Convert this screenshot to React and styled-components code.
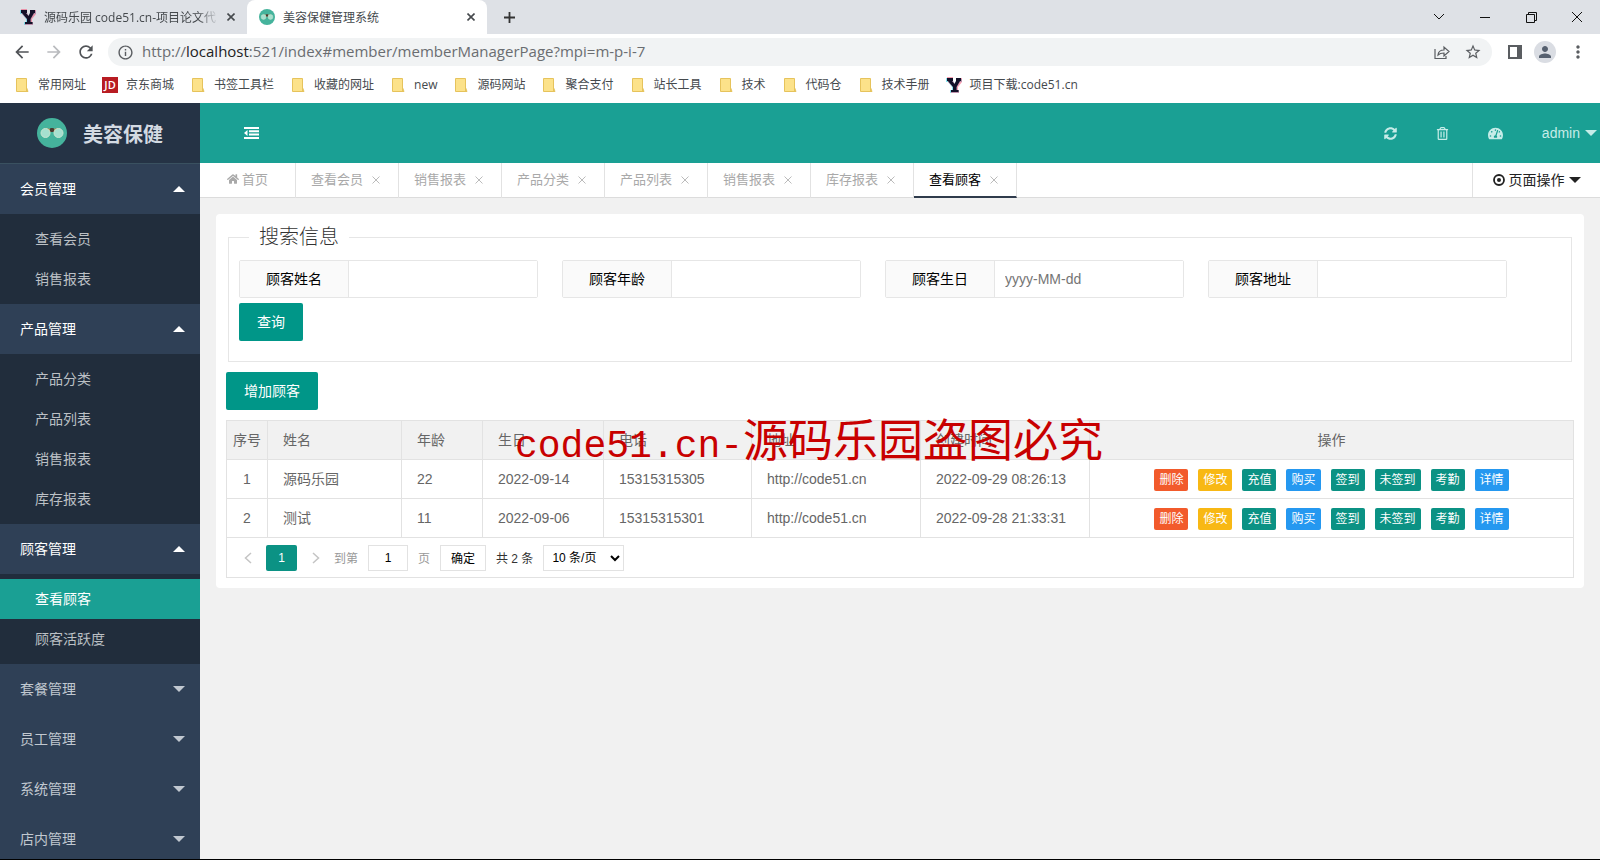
import React, { useState } from "react"
import styled, { createGlobalStyle } from "styled-components"
import { FaHome, FaRegTrashAlt, FaSyncAlt, FaTachometerAlt } from "react-icons/fa"
import {
  MdArrowBack,
  MdArrowForward,
  MdRefresh,
  MdInfoOutline,
  MdStarBorder,
  MdPerson,
  MdMoreVert,
} from "react-icons/md"

const sans = `"Liberation Sans", "Noto Sans CJK SC", sans-serif`
const chromeSans = `"Open Sans", "Noto Sans CJK SC", sans-serif`

const GlobalStyle = createGlobalStyle`
  * {
    box-sizing: border-box;
  }

  body {
    margin: 0;
    background: #f1f1f1;
    font-family: ${sans};
    font-size: 14px;
    color: #333;
  }

  button, input, select {
    font-family: inherit;
    margin: 0;
  }

  a {
    color: inherit;
    text-decoration: none;
  }
`

const Page = styled.div`
  position: relative;
  display: flex;
  flex-direction: column;
  height: 100vh;
  overflow: hidden;
  border-bottom: 1px solid #000;
`

/* browser window */

const TabStrip = styled.div`
  display: flex;
  align-items: center;
  flex: none;
  height: 34px;
  background: #dee1e6;
  font-family: ${chromeSans};
  font-size: 12px;
`

const BrowserTab = styled.div`
  display: flex;
  align-items: center;
  gap: 8px;
  width: ${props => (props.$active ? "240px" : "247px")};
  height: 34px;
  padding: 0 12px 0 ${props => (props.$active ? "12px" : "20px")};
  border-radius: 8px 8px 0 0;
  background: ${props => (props.$active ? "#fff" : "transparent")};
  color: #45494d;
`

const TabTitle = styled.span`
  flex: 1;
  overflow: hidden;
  white-space: nowrap;
  mask-image: ${props =>
    props.$fade ? "linear-gradient(to right, #000 88%, transparent)" : "none"};
`

const PlainButton = styled.button`
  display: flex;
  align-items: center;
  justify-content: center;
  flex: none;
  padding: 0;
  border: 0;
  background: none;
  color: inherit;
  cursor: pointer;
`

const NewTab = styled(PlainButton)`
  width: 44px;
`

const WindowButtons = styled.div`
  display: flex;
  margin-left: auto;
  height: 28px;
  color: #111;
`

const WindowButton = styled(PlainButton)`
  width: 46px;
`

const Toolbar = styled.div`
  display: flex;
  align-items: center;
  flex: none;
  height: 36px;
  padding: 0 12px;
  background: #fff;
  color: #5a5d61;
`

const NavButton = styled(PlainButton)`
  width: 20px;
  margin-right: 12px;
  font-size: 20px;
  color: ${props => (props.$off ? "#b9bbbe" : "#505357")};
`

const Omnibox = styled.div`
  display: flex;
  align-items: center;
  flex: 1;
  height: 28px;
  padding: 0 10px 0 9px;
  border-radius: 14px;
  background: #f1f3f4;
  gap: 14px;
`

const Address = styled.div`
  display: flex;
  align-items: center;
  gap: 8px;
  flex: 1;
`

const Url = styled.span`
  flex: 1;
  padding-bottom: 2px;
  font-family: ${chromeSans};
  font-size: 15px;
  line-height: 20px;
  color: #6a6d71;
  white-space: nowrap;

  b {
    font-weight: 400;
    color: #222;
  }
`

const ToolbarIcons = styled.div`
  display: flex;
  align-items: center;
  gap: 12px;
  padding-left: 16px;
`

const Avatar = styled(PlainButton)`
  width: 22px;
  height: 22px;
  border-radius: 50%;
  background: #dadde3;
  color: #56606f;
  font-size: 18px;
`

const Bookmarks = styled.nav`
  display: flex;
  align-items: center;
  flex: none;
  gap: 16px;
  height: 33px;
  padding: 0 14px 4px;
  background: #fff;
  font-family: ${chromeSans};
  font-size: 12px;
  line-height: 16px;
  color: #45494d;
`

const Bookmark = styled.a`
  display: flex;
  align-items: center;
  gap: 8px;
  white-space: nowrap;
`

const JdMark = styled.span`
  width: 16px;
  height: 16px;
  background: #b81c22;
  color: #fff;
  font-size: 11px;
  line-height: 16px;
  font-weight: 600;
  text-align: center;
`

/* admin application */

const Admin = styled.div`
  display: flex;
  flex: 1;
  min-height: 0;
`

const Sidebar = styled.aside`
  flex: none;
  width: 200px;
  overflow: hidden;
  background: #2f4056;
`

const Brand = styled.div`
  display: flex;
  align-items: center;
  gap: 16px;
  height: 61px;
  padding-left: 37px;
  background: #253345;
  border-bottom: 1px solid #3a5160;
  color: #d3dae2;
  font-size: 20px;
  font-weight: 700;
`

const GroupTitle = styled.button`
  display: flex;
  align-items: center;
  justify-content: space-between;
  width: 100%;
  height: 50px;
  padding: 0 15px 1px 20px;
  border: 0;
  background: none;
  color: ${props => (props.$open ? "#fff" : "#c1c8d0")};
  font-size: 14px;
  line-height: 20px;
  cursor: pointer;
`

const SubMenu = styled.div`
  padding: 5px 0;
  background: #212d3c;
`

const SubLink = styled.a`
  display: block;
  height: 40px;
  padding-left: 35px;
  line-height: 40px;
  background: ${props => (props.$active ? "#1aa094" : "transparent")};
  color: ${props => (props.$active ? "#fff" : "#bcc0c5")};
`

const Caret = styled.span`
  width: 0;
  border: 6px solid transparent;
  border-width: ${props => (props.$up ? "0 6px 6px" : "6px 6px 0")};
  border-top-color: currentColor;
  border-bottom-color: currentColor;
`

const Main = styled.main`
  flex: 1;
  min-width: 0;
`

const Header = styled.header`
  display: flex;
  align-items: center;
  height: 60px;
  padding: 0 3px 0 44px;
  background: #1aa094;
  color: #c6ece8;
`

const FoldButton = styled(PlainButton)`
  color: #fff;
`

const HeaderTools = styled.div`
  display: flex;
  align-items: center;
  gap: 39px;
  margin-left: auto;
  font-size: 13px;
`

const User = styled(PlainButton)`
  gap: 5px;
  font-size: 14px;
`

const PageTabs = styled.nav`
  display: flex;
  height: 35px;
  background: #fff;
  border-bottom: 1px solid #dcdcdc;
`

const PageTab = styled.div`
  display: flex;
  align-items: center;
  justify-content: space-between;
  width: 103px;
  height: 35px;
  padding: 0 18px ${props => (props.$active ? "2px" : "4px")} 15px;
  border-right: 1px solid #e2e2e2;
  border-bottom: ${props => (props.$active ? "2px solid #2f3b4c" : "0")};
  color: ${props => (props.$active ? "#000" : "#a9a9a9")};
  font-size: 13px;
  white-space: nowrap;
`

const HomeTab = styled(PageTab)`
  width: 96px;
  padding-left: 27px;
  justify-content: flex-start;
  gap: 3px;
`

const CloseTab = styled(PlainButton)`
  padding-top: 2px;
  color: #bbb;
`

const PageActions = styled(PlainButton)`
  gap: 4px;
  width: 128px;
  margin-left: auto;
  border-left: 1px solid #e2e2e2;
  font-size: 14px;
  line-height: 20px;
  color: #222;
`

const Card = styled.section`
  margin: 16px;
  padding: 10px;
  border-radius: 4px;
  background: #fff;
`

const SearchBox = styled.fieldset`
  min-width: 0;
  margin: 0 2px 10px;
  padding: 10px 10px 20px;
  border: 1px solid #e6e6e6;

  legend {
    margin-left: 10px;
    padding: 0 10px;
    font-size: 20px;
    font-weight: 300;
    line-height: 26px;
  }
`

const Fields = styled.div`
  display: flex;
  flex-wrap: wrap;
  gap: 5px 24px;
  margin-bottom: 5px;
`

const Field = styled.div`
  display: flex;
  width: 299px;
  height: 38px;
  border: 1px solid #e6e6e6;
  border-radius: 2px;

  label {
    width: 109px;
    flex: none;
    border-right: 1px solid #e6e6e6;
    background: #fafafa;
    color: #000;
    line-height: 36px;
    text-align: center;
  }

  input {
    flex: 1;
    min-width: 0;
    padding: 0 0 0 10px;
    border: 0;
    font-size: 14px;
  }

  input::placeholder {
    color: #757575;
  }
`

const Button = styled.button`
  display: block;
  height: 38px;
  padding: 0 18px 2px;
  border: 0;
  border-radius: 2px;
  background: #009688;
  color: #fff;
  font-size: 14px;
  cursor: pointer;
`

const TableBox = styled.div`
  margin: 10px 0 0;
  border: 1px solid #e2e2e2;
`

const Table = styled.table`
  width: 100%;
  table-layout: fixed;
  border-collapse: separate;
  border-spacing: 0;
  color: #666;

  th,
  td {
    height: 39px;
    padding: 0 15px;
    border-right: 1px solid #e2e2e2;
    border-bottom: 1px solid #e2e2e2;
    font-weight: 400;
    line-height: 20px;
    text-align: left;
    white-space: nowrap;
  }

  th {
    background: #f1f1f1;
  }

  th:first-child,
  td:first-child {
    padding: 0;
    text-align: center;
  }

  th:last-child,
  td:last-child {
    border-right: 0;
    text-align: center;
  }
`

const Actions = styled.div`
  display: flex;
  justify-content: center;
  gap: 10px;
  padding-top: 1px;
`

const tones = {
  red: "#f25a2b",
  yellow: "#f8b814",
  green: "#0b9284",
  blue: "#2598f0",
}

const MiniButton = styled.button`
  height: 22px;
  padding: 0 5px;
  border: 0;
  border-radius: 2px;
  background: ${props => tones[props.$tone]};
  color: #fff;
  font-size: 12px;
  line-height: 22px;
  cursor: pointer;
`

const Pager = styled.div`
  display: flex;
  align-items: center;
  height: 39px;
  padding-left: 12px;
  gap: 10px;
  font-size: 12px;
  color: #999;
`

const PagerArrow = styled(PlainButton)`
  width: 17px;
  color: #c4c4c4;
`

const PagerCurrent = styled(PlainButton)`
  width: 31px;
  height: 26px;
  border-radius: 2px;
  background: #0b9284;
  color: #fff;
  font-size: 12px;
`

const PagerLabel = styled.label`
  display: flex;
  align-items: center;
  gap: 10px;

  input {
    width: 40px;
    height: 26px;
    padding: 0;
    border: 1px solid #e2e2e2;
    text-align: center;
    font-size: 12px;
    color: #000;
  }
`

const PagerButton = styled(PlainButton)`
  width: 46px;
  height: 26px;
  border: 1px solid #e2e2e2;
  background: #fff;
  color: #000;
  font-size: 12px;
`

const PagerTotal = styled.span`
  color: #333;
`

const PagerSelect = styled.select`
  width: 81px;
  height: 26px;
  padding: 0 0 0 4px;
  border: 1px solid #e2e2e2;
  background: #fff;
  color: #000;
  font-size: 12px;
`

const Watermark = styled.div`
  position: absolute;
  top: 406px;
  left: 515px;
  color: #c80000;
  font-family: "Noto Sans CJK SC", sans-serif;
  font-size: 45px;
  line-height: 64px;
  white-space: nowrap;
  pointer-events: none;

  span {
    font-family: "Liberation Mono", monospace;
    font-size: 38px;
  }
`

const Cross = ({ size = 8, width = 1.6 }) => (
  <svg width={size} height={size} viewBox="0 0 8 8" aria-hidden="true">
    <path d="M.5 .5 7.5 7.5M7.5 .5 .5 7.5" stroke="currentColor" strokeWidth={width} />
  </svg>
)

const CodeMark = () => (
  <svg width="16" height="16" viewBox="0 0 16 16" aria-hidden="true">
    <path d="M0 1h7v3l2 3 1-3V2h6v3h-2l-3 5v3h2v3H4v-3h2v-3L2 5H0z" fill="#3ed3e6" opacity=".6" />
    <path d="M1 0h6v4l2 3 2-4V1h5v4l-4 5v3h1v3H5v-3h2v-3L2 5z" fill="#f4436c" opacity=".5" />
    <path d="M1 1h6v3h-1l2.500 3L10 4V1h5v3h-1l-3.500 6v3h2v2H5v-2h2v-3L2 4H1z" fill="#131128" />
  </svg>
)

const SpaLogo = ({ size }) => (
  <svg width={size} height={size} viewBox="0 0 30 30" aria-hidden="true">
    <circle cx="15" cy="15" r="15" fill="#45b39c" />
    <path d="M6 12q3-3 7-1h4q4-2 7 1l-6 2h-6z" fill="#b98650" />
    <rect x="13" y="10" width="4" height="4" rx="1" fill="#4a3a31" />
    <circle cx="8.500" cy="15" r="4.500" fill="#a6e0cf" stroke="#c9e6d2" />
    <circle cx="21.500" cy="15" r="4.500" fill="#a6e0cf" stroke="#c9e6d2" />
  </svg>
)

const FolderIcon = () => (
  <svg width="16" height="16" viewBox="0 0 16 16" aria-hidden="true">
    <path d="M2.500 1.500h10v9l1.500 4H2.500z" fill="#fce28a" stroke="#e6c35c" />
    <path d="M12.500 9v5.500" stroke="#e6c35c" />
  </svg>
)

const FoldIcon = () => (
  <svg width="15" height="12" viewBox="0 0 15 12" aria-hidden="true">
    <path d="M0 0h15v2H0zM5 3.300h10v2H5zM5 6.600h10v2H5zM0 10h15v2H0zM3.500 3v6L0 6z" fill="currentColor" />
  </svg>
)

const DotCircle = () => (
  <svg width="12" height="12" viewBox="0 0 12 12" aria-hidden="true">
    <circle cx="6" cy="6" r="5" fill="none" stroke="currentColor" strokeWidth="1.800" />
    <circle cx="6" cy="6" r="2" fill="currentColor" />
  </svg>
)

const Chevron = ({ right }) => (
  <svg width="8" height="12" viewBox="0 0 8 12" aria-hidden="true">
    <path d={right ? "M1 1l5.500 5L1 11" : "M7 1 1.500 6 7 11"} fill="none" stroke="currentColor" strokeWidth="1.500" />
  </svg>
)

const bookmarks = [
  "常用网址",
  "京东商城",
  "书签工具栏",
  "收藏的网址",
  "new",
  "源码网站",
  "聚合支付",
  "站长工具",
  "技术",
  "代码仓",
  "技术手册",
  "项目下载:code51.cn",
]

const menu = [
  { title: "会员管理", items: ["查看会员", "销售报表"] },
  { title: "产品管理", items: ["产品分类", "产品列表", "销售报表", "库存报表"] },
  { title: "顾客管理", items: ["查看顾客", "顾客活跃度"] },
  { title: "套餐管理", items: [] },
  { title: "员工管理", items: [] },
  { title: "系统管理", items: [] },
  { title: "店内管理", items: [] },
]

const pageTabs = ["查看会员", "销售报表", "产品分类", "产品列表", "销售报表", "库存报表", "查看顾客"]

const fields = [
  { id: "name", label: "顾客姓名" },
  { id: "age", label: "顾客年龄" },
  { id: "birthday", label: "顾客生日", placeholder: "yyyy-MM-dd" },
  { id: "address", label: "顾客地址" },
]

const columns = [
  { title: "序号", width: 41 },
  { title: "姓名", width: 134 },
  { title: "年龄", width: 81 },
  { title: "生日", width: 121 },
  { title: "电话", width: 148 },
  { title: "地址", width: 169 },
  { title: "创建时间", width: 169 },
  { title: "操作" },
]

const customers = [
  ["1", "源码乐园", "22", "2022-09-14", "15315315305", "http://code51.cn", "2022-09-29 08:26:13"],
  ["2", "测试", "11", "2022-09-06", "15315315301", "http://code51.cn", "2022-09-28 21:33:31"],
]

const actions = [
  ["删除", "red"],
  ["修改", "yellow"],
  ["充值", "green"],
  ["购买", "blue"],
  ["签到", "green"],
  ["未签到", "green"],
  ["考勤", "green"],
  ["详情", "blue"],
]

const BookmarkIcon = ({ name }) => {
  if (name === "京东商城") return <JdMark aria-hidden="true">JD</JdMark>
  if (name.startsWith("项目下载")) return <CodeMark />
  return <FolderIcon />
}

const BrowserChrome = () => (
  <>
    <TabStrip>
      <BrowserTab>
        <CodeMark />
        <TabTitle $fade>源码乐园 code51.cn-项目论文代</TabTitle>
        <PlainButton aria-label="关闭标签页">
          <Cross />
        </PlainButton>
      </BrowserTab>
      <BrowserTab $active>
        <SpaLogo size={16} />
        <TabTitle>美容保健管理系统</TabTitle>
        <PlainButton aria-label="关闭标签页">
          <Cross />
        </PlainButton>
      </BrowserTab>
      <NewTab aria-label="新标签页">
        <svg width="13" height="13" viewBox="0 0 13 13">
          <path d="M6.500 1v11M1 6.500h11" stroke="#333" strokeWidth="1.800" />
        </svg>
      </NewTab>
      <WindowButtons>
        <WindowButton aria-label="搜索标签页">
          <svg width="12" height="8" viewBox="0 0 12 8" fill="none" stroke="currentColor">
            <path d="M1 1l5 5 5-5" />
          </svg>
        </WindowButton>
        <WindowButton aria-label="最小化">
          <svg width="10" height="10" viewBox="0 0 10 10" stroke="currentColor">
            <path d="M0 5.500h10" />
          </svg>
        </WindowButton>
        <WindowButton aria-label="还原">
          <svg width="11" height="11" viewBox="0 0 11 11" fill="none" stroke="currentColor">
            <path d="M.5 2.500h8v8h-8zM2.500 2.500v-2h8v8h-2" />
          </svg>
        </WindowButton>
        <WindowButton aria-label="关闭">
          <svg width="10" height="10" viewBox="0 0 10 10" stroke="currentColor">
            <path d="M0 0l10 10M10 0 0 10" />
          </svg>
        </WindowButton>
      </WindowButtons>
    </TabStrip>
    <Toolbar>
      <NavButton aria-label="后退">
        <MdArrowBack />
      </NavButton>
      <NavButton aria-label="前进" $off>
        <MdArrowForward />
      </NavButton>
      <NavButton aria-label="刷新">
        <MdRefresh />
      </NavButton>
      <Omnibox>
        <Address>
          <MdInfoOutline size={17} />
          <Url>
            http://<b>localhost</b>:521/index#member/memberManagerPage?mpi=m-p-i-7
          </Url>
        </Address>
        <PlainButton aria-label="分享">
          <svg width="16" height="16" viewBox="0 0 16 16" fill="none" stroke="currentColor" strokeWidth="1.200">
            <path d="M1 5v9.500h11V12M4 11q.5-5 6-5V3l5 4.500-5 4.500V9q-4 0-6 2z" />
          </svg>
        </PlainButton>
        <PlainButton aria-label="收藏">
          <MdStarBorder size={18} />
        </PlainButton>
      </Omnibox>
      <ToolbarIcons>
        <PlainButton aria-label="侧边栏">
          <svg width="14" height="14" viewBox="0 0 14 14">
            <path d="M1 1h12v12H1z" fill="none" stroke="currentColor" strokeWidth="2" />
            <path d="M9 1h5v12H9z" fill="currentColor" />
          </svg>
        </PlainButton>
        <Avatar aria-label="用户">
          <MdPerson />
        </Avatar>
        <PlainButton aria-label="菜单">
          <MdMoreVert size={20} />
        </PlainButton>
      </ToolbarIcons>
    </Toolbar>
    <Bookmarks>
      {bookmarks.map(name => (
        <Bookmark href="#" key={name}>
          <BookmarkIcon name={name} />
          {name}
        </Bookmark>
      ))}
    </Bookmarks>
  </>
)

const SideNav = () => {
  const [open, setOpen] = useState(["会员管理", "产品管理", "顾客管理"])

  const toggle = title =>
    setOpen(open.includes(title) ? open.filter(t => t !== title) : [...open, title])

  return (
    <Sidebar>
      <Brand>
        <SpaLogo size={30} />
        美容保健
      </Brand>
      {menu.map(({ title, items }) => {
        const isOpen = open.includes(title)
        return (
          <div key={title}>
            <GroupTitle $open={isOpen} onClick={() => toggle(title)}>
              {title}
              <Caret $up={isOpen} />
            </GroupTitle>
            {isOpen && items.length > 0 && (
              <SubMenu>
                {items.map(item => (
                  <SubLink href="#" key={item} $active={item === "查看顾客"}>
                    {item}
                  </SubLink>
                ))}
              </SubMenu>
            )}
          </div>
        )
      })}
    </Sidebar>
  )
}

const SearchForm = () => (
  <SearchBox>
    <legend>搜索信息</legend>
    <Fields>
      {fields.map(({ id, label, placeholder }) => (
        <Field key={id}>
          <label htmlFor={id}>{label}</label>
          <input id={id} type="text" placeholder={placeholder} />
        </Field>
      ))}
    </Fields>
    <Button type="button">查询</Button>
  </SearchBox>
)

const CustomerTable = () => (
  <TableBox>
    <Table>
      <colgroup>
        {columns.map(({ title, width }) => (
          <col key={title} width={width} />
        ))}
      </colgroup>
      <thead>
        <tr>
          {columns.map(({ title }) => (
            <th key={title}>{title}</th>
          ))}
        </tr>
      </thead>
      <tbody>
        {customers.map(row => (
          <tr key={row[0]}>
            {row.map((cell, i) => (
              <td key={i}>{cell}</td>
            ))}
            <td>
              <Actions>
                {actions.map(([label, tone]) => (
                  <MiniButton key={label} $tone={tone}>
                    {label}
                  </MiniButton>
                ))}
              </Actions>
            </td>
          </tr>
        ))}
      </tbody>
    </Table>
    <Pager>
      <PagerArrow aria-label="上一页">
        <Chevron />
      </PagerArrow>
      <PagerCurrent>1</PagerCurrent>
      <PagerArrow aria-label="下一页">
        <Chevron right />
      </PagerArrow>
      <PagerLabel>
        到第
        <input type="text" defaultValue="1" />页
      </PagerLabel>
      <PagerButton>确定</PagerButton>
      <PagerTotal>共 2 条</PagerTotal>
      <PagerSelect aria-label="每页条数">
        <option>10 条/页</option>
        <option>20 条/页</option>
      </PagerSelect>
    </Pager>
  </TableBox>
)

const App = () => (
  <>
    <GlobalStyle />
    <Page>
      <BrowserChrome />
      <Admin>
        <SideNav />
        <Main>
          <Header>
            <FoldButton aria-label="收起菜单">
              <FoldIcon />
            </FoldButton>
            <HeaderTools>
              <PlainButton aria-label="刷新">
                <FaSyncAlt size={13} />
              </PlainButton>
              <PlainButton aria-label="清理">
                <FaRegTrashAlt size={13} />
              </PlainButton>
              <PlainButton aria-label="控制台">
                <FaTachometerAlt size={15} />
              </PlainButton>
              <User>
                admin
                <Caret />
              </User>
            </HeaderTools>
          </Header>
          <PageTabs>
            <HomeTab>
              <FaHome size={12} />
              首页
            </HomeTab>
            {pageTabs.map((title, i) => (
              <PageTab key={i} $active={i === pageTabs.length - 1}>
                {title}
                <CloseTab aria-label="关闭">
                  <Cross width={1} />
                </CloseTab>
              </PageTab>
            ))}
            <PageActions>
              <DotCircle />
              页面操作
              <Caret />
            </PageActions>
          </PageTabs>
          <Card>
            <SearchForm />
            <Button type="button">增加顾客</Button>
            <CustomerTable />
          </Card>
        </Main>
      </Admin>
      <Watermark>
        <span>code51.cn-</span>源码乐园盗图必究
      </Watermark>
    </Page>
  </>
)
export default App
